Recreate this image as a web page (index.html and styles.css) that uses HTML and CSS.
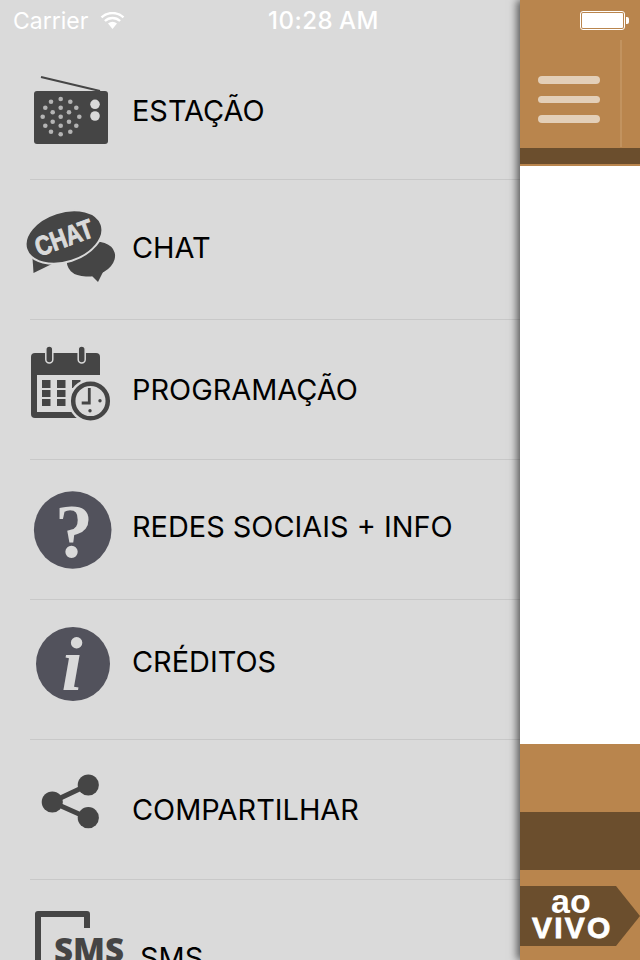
FILE: index.html
```html
<!DOCTYPE html>
<html lang="en">
<head>
    <meta charset="UTF-8">
    <title>Menu</title>
    <link rel="stylesheet" href="styles.css">
</head>
<body>
    <div class="status-bar">
        <span class="carrier">Carrier</span>
        <svg class="wifi" width="25" height="18" viewBox="0 0 25 18">
            <path d="M12.5 17 L8 11.5 A7 7 0 0 1 17 11.5 Z" fill="#fff"/>
            <path d="M4.9 9 A11 11 0 0 1 20.1 9" fill="none" stroke="#fff" stroke-width="2.4"/>
            <path d="M1.5 5.4 A16 16 0 0 1 23.5 5.4" fill="none" stroke="#fff" stroke-width="2.4"/>
        </svg>
        <span class="clock">10:28 AM</span>
        <span class="battery"><span class="battery-fill"></span></span>
        <span class="battery-tip"></span>
    </div>

    <nav class="drawer">
        <a class="row row-first">
            <svg class="icon" viewBox="30 0 103 140">
                <path d="M41 37 L100 51" stroke="#454545" stroke-width="2" fill="none"/>
                <rect x="34" y="51" width="74" height="53" rx="3" fill="#454545"/>
                <g fill="#b4b4b4">
                    <circle cx="60.7" cy="59" r="2.3"/><circle cx="51" cy="61.7" r="2.3"/><circle cx="70.3" cy="61.7" r="2.3"/>
                    <circle cx="45.3" cy="67.7" r="2.3"/><circle cx="76.3" cy="67.7" r="2.3"/><circle cx="42.7" cy="76.7" r="2.3"/>
                    <circle cx="79.3" cy="76.7" r="2.3"/><circle cx="45.3" cy="85.7" r="2.3"/><circle cx="76.3" cy="85.7" r="2.3"/>
                    <circle cx="51" cy="91.7" r="2.3"/><circle cx="70.3" cy="91.7" r="2.3"/><circle cx="60.7" cy="94.3" r="2.3"/>
                    <circle cx="60.7" cy="67.7" r="2.3"/><circle cx="52.7" cy="72.3" r="2.3"/><circle cx="69" cy="72.3" r="2.3"/>
                    <circle cx="52.7" cy="81.7" r="2.3"/><circle cx="69" cy="81.7" r="2.3"/><circle cx="60.7" cy="85.7" r="2.3"/>
                    <circle cx="60.7" cy="76.7" r="2.3"/>
                </g>
                <circle cx="95" cy="64.3" r="4.8" fill="#dadada"/>
                <circle cx="95" cy="76" r="4.8" fill="#dadada"/>
            </svg>
            <span class="label">ESTAÇÃO</span>
        </a>
        <a class="row row-chat">
            <svg class="icon" viewBox="30 0 103 140">
                <ellipse cx="91" cy="79" rx="24.5" ry="17" transform="rotate(-15 91 79)" fill="#454545"/>
                <path d="M88 92 L104 90 L98 102 Z" fill="#454545"/>
                <path d="M32 70 L33.5 93 L56 82 Z" fill="#454545"/>
                <ellipse cx="64" cy="57" rx="39.5" ry="25" transform="rotate(-18 64 57)" fill="#454545" stroke="#dadada" stroke-width="2"/>
                <text class="chat-text" x="64" y="67" textLength="60" lengthAdjust="spacingAndGlyphs" transform="rotate(-20 64 58)">CHAT</text>
            </svg>
            <span class="label">CHAT</span>
        </a>
        <a class="row row-prog">
            <svg class="icon" viewBox="30 0 103 140">
                <rect x="31" y="33" width="69" height="65" rx="4" fill="#454545"/>
                <rect x="37" y="55" width="63" height="37" fill="#dadada"/>
                <g fill="#454545">
                    <rect x="42" y="60" width="8.5" height="8"/><rect x="57" y="60" width="8.5" height="8"/><rect x="72" y="60" width="8.5" height="8"/>
                    <rect x="42" y="70" width="8.5" height="7"/><rect x="57" y="70" width="8.5" height="7"/><rect x="72" y="70" width="8.5" height="7"/>
                    <rect x="42" y="79" width="8.5" height="7"/><rect x="57" y="79" width="8.5" height="7"/>
                </g>
                <rect x="45.8" y="26" width="7" height="17" rx="3.5" fill="#454545" stroke="#dadada" stroke-width="1.5"/>
                <rect x="78.2" y="26" width="7" height="17" rx="3.5" fill="#454545" stroke="#dadada" stroke-width="1.5"/>
                <circle cx="90.5" cy="81" r="22" fill="#dadada"/>
                <circle cx="90.5" cy="81" r="17.3" fill="none" stroke="#454545" stroke-width="4.5"/>
                <path d="M89.3 68 V83 H81.7" fill="none" stroke="#454545" stroke-width="2.8"/>
                <circle cx="100" cy="80.7" r="1.7" fill="#454545"/>
                <circle cx="90" cy="90.7" r="1.7" fill="#454545"/>
            </svg>
            <span class="label">PROGRAMAÇÃO</span>
        </a>
        <a class="row row-redes">
            <svg class="icon" viewBox="30 0 103 140">
                <circle cx="72.7" cy="70" r="38.8" fill="#52525c"/>
                <text class="help-text" x="74" y="97">?</text>
            </svg>
            <span class="label">REDES SOCIAIS + INFO</span>
        </a>
        <a class="row row-cred">
            <svg class="icon" viewBox="30 0 103 140">
                <circle cx="73" cy="64" r="37" fill="#52525c"/>
                <text class="info-text" x="72" y="90">i</text>
            </svg>
            <span class="label">CRÉDITOS</span>
        </a>
        <a class="row row-share">
            <svg class="icon" viewBox="30 0 103 140">
                <path d="M88 45 L52 62 L88 78" fill="none" stroke="#454545" stroke-width="5"/>
                <circle cx="88.3" cy="45" r="10.6" fill="#454545"/>
                <circle cx="52.3" cy="62" r="10.6" fill="#454545"/>
                <circle cx="88.3" cy="77.7" r="10.6" fill="#454545"/>
            </svg>
            <span class="label">COMPARTILHAR</span>
        </a>
        <a class="row row-sms">
            <svg class="icon" viewBox="30 0 103 140">
                <path d="M38 100 V34 H87 V48" fill="none" stroke="#454545" stroke-width="6" stroke-linejoin="round"/>
                <text class="sms-text" x="54" y="82">SMS</text>
            </svg>
            <span class="label">SMS</span>
        </a>
    </nav>

    <main class="panel">
        <div class="panel-top">
            <div class="menu-btn">
                <span class="bar"></span>
                <span class="bar"></span>
                <span class="bar"></span>
            </div>
        </div>
        <div class="panel-stripe"></div>
        <div class="panel-body"></div>
        <div class="panel-player">
            <div class="player-stripe"></div>
            <div class="live-tag">
                <span class="live-ao">ao</span>
                <span class="live-vivo">VIVO</span>
            </div>
        </div>
    </main>
</body>
</html>
```

FILE: styles.css
```css
* {
    margin: 0;
    padding: 0;
    box-sizing: border-box;
}

:root {
    --drawer-bg: #dadada;
    --brown: #b9854d;
    --dark-brown: #6b4e2d;
}

body {
    width: 640px;
    height: 960px;
    overflow: hidden;
    display: flex;
    background: var(--drawer-bg);
    font-family: Inter, "Liberation Sans", sans-serif;
}

/* status bar sits over both panels */
.status-bar {
    position: absolute;
    top: 0;
    left: 0;
    width: 640px;
    height: 40px;
    z-index: 2;
    color: #fff;
    font-size: 23px;
}

.carrier {
    position: absolute;
    left: 13px;
    top: 7px;
}

.wifi {
    position: absolute;
    left: 100px;
    top: 12px;
}

.clock {
    position: absolute;
    left: 268px;
    top: 6px;
    font-size: 24px;
    font-weight: 500;
    letter-spacing: 0.5px;
    word-spacing: -1px;
}

.battery {
    position: absolute;
    left: 580px;
    top: 11px;
    width: 45px;
    height: 19px;
    border: 1px solid #fff;
    border-radius: 3px;
    padding: 1px;
}

.battery-fill {
    display: block;
    height: 100%;
    background: #fff;
    border-radius: 1px;
}

.battery-tip {
    position: absolute;
    left: 626px;
    top: 17px;
    width: 3px;
    height: 7px;
    background: #fff;
    border-radius: 0 2px 2px 0;
}

.drawer {
    width: 520px;
    flex-shrink: 0;
    padding-top: 40px;
    padding-left: 30px;
    overflow: hidden;
}

.row {
    display: flex;
    align-items: center;
    height: 140px;
    border-bottom: 1px solid #c8c8c8;
}

.row-sms {
    border-bottom: none;
}

.icon {
    width: 103px;
    height: 140px;
    flex-shrink: 0;
    overflow: visible;
}

.label {
    font-size: 28.9px;
    margin-left: -1px;
    color: #000;
    white-space: nowrap;
}

.row-first .label { margin-top: 1px; }
.row-chat .label { margin-top: -4px; }
.row-redes .label { margin-top: -6px; }
.row-cred .label { margin-top: -16px; }
.row-sms .label { margin-top: 15px; margin-left: 7px; }

.chat-text {
    font-family: "Liberation Sans", sans-serif;
    font-size: 27px;
    font-weight: 700;
    fill: var(--drawer-bg);
    stroke: var(--drawer-bg);
    stroke-width: 1px;
    text-anchor: middle;
}

.help-text {
    font-family: "Liberation Serif", serif;
    font-size: 76px;
    font-weight: 700;
    fill: var(--drawer-bg);
    text-anchor: middle;
}

.info-text {
    font-family: "Liberation Serif", serif;
    font-size: 76px;
    font-weight: 700;
    font-style: italic;
    fill: var(--drawer-bg);
    text-anchor: middle;
}

.sms-text {
    font-family: "Open Sans", sans-serif;
    font-size: 33px;
    font-weight: 800;
    fill: #454545;
}

.panel {
    width: 120px;
    flex-shrink: 0;
    height: 960px;
    display: flex;
    flex-direction: column;
    background: var(--brown);
    box-shadow: -3px 0 8px rgba(0, 0, 0, 0.6);
}

.panel-top {
    height: 148px;
    padding: 40px 18px 0 0;
}

.menu-btn {
    height: 107px;
    padding: 36px 0 0 18px;
    border-right: 2px solid #c2935f;
    display: flex;
    flex-direction: column;
    gap: 12px;
}

.bar {
    display: block;
    width: 62px;
    height: 7.5px;
    border-radius: 4px;
    background: #e3cfb8;
}

.panel-stripe {
    height: 16px;
    background: var(--dark-brown);
}

.panel-body {
    height: 578px;
    margin-top: 2px;
    background: #fff;
}

.panel-player {
    flex: 1;
    padding-top: 68px;
}

.player-stripe {
    height: 58px;
    background: var(--dark-brown);
}

.live-tag {
    width: 120px;
    height: 60px;
    margin-top: 16px;
    padding: 1px 0 0 12px;
    background: var(--dark-brown);
    clip-path: polygon(0 0, 96px 0, 120px 30px, 96px 60px, 0 60px);
    display: flex;
    flex-direction: column;
    align-items: flex-start;
    color: #fff;
    font-family: "Liberation Sans", sans-serif;
    font-weight: 700;
}

.live-ao {
    font-size: 34px;
    margin-left: 19px;
    line-height: 28px;
}

.live-vivo {
    font-size: 30px;
    line-height: 24px;
    margin-top: 1px;
    letter-spacing: 2.2px;
    -webkit-text-stroke: 0.8px #fff;
}
```
